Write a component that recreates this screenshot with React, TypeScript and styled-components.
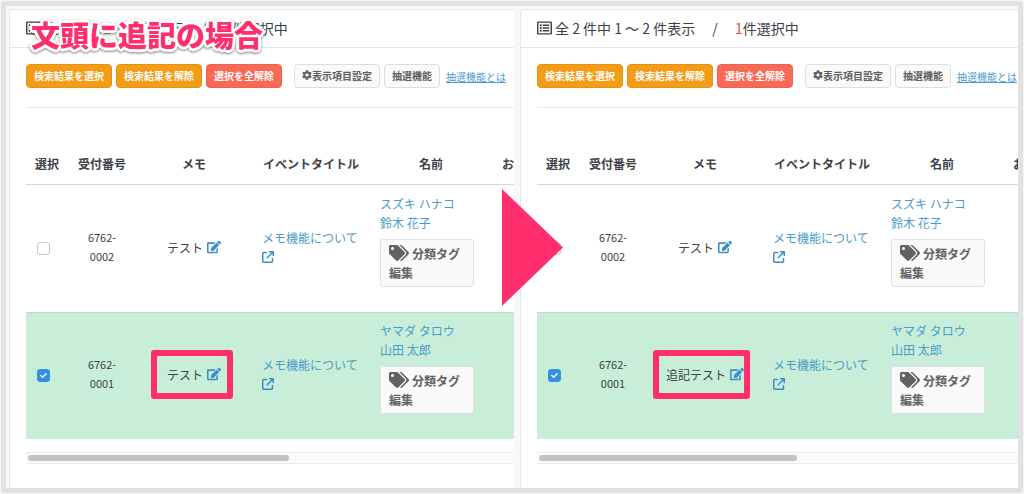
import React from 'react';
import styled, { createGlobalStyle } from 'styled-components';
import { FaCheck, FaCog, FaEdit, FaRegListAlt, FaTags } from 'react-icons/fa';
import { FaArrowUpRightFromSquare } from 'react-icons/fa6';

const PINK = '#ff2f6e';
const LINK = '#4a9cca';

const GlobalStyle = createGlobalStyle`
  *, *::before, *::after { box-sizing: border-box; }
  body {
    margin: 0;
    background: #f4f4f4;
    color: #3c4147;
    font-family: "Noto Sans CJK JP", "Noto Sans", sans-serif;
    font-size: 12px;
    line-height: 19px;
  }
  button, input { font: inherit; margin: 0; }
`;

const Page = styled.div`
  min-height: 100vh;
  padding: 1px;
  display: flex;
`;

const Frame = styled.main`
  flex: 1;
  min-width: 0;
  display: grid;
  grid-template-columns: minmax(0, 127fr) minmax(0, 126fr);
  border: 5px solid #e2e2e2;
  border-radius: 4px;
  background: #f8f8f8;
`;

const Shot = styled.section<{ $inset: number }>`
  display: flex;
  position: relative;
  padding: 3px 0 0 ${(p) => p.$inset}px;
`;

const Panel = styled.div`
  flex: 1;
  min-width: 0;
  overflow: hidden;
  background: #fff;
  border: solid #e8e8e8;
  border-width: 1px 0 0 1px;
  border-top-left-radius: 3px;
`;

const PanelHeader = styled.header`
  display: flex;
  align-items: center;
  height: 38px;
  padding: 0 0 2px 16px;
  border-bottom: 1px solid #e6e6e6;
`;

const Heading = styled.h2`
  display: flex;
  align-items: center;
  gap: 3px;
  margin: 0;
  font-size: 14px;
  font-weight: 400;
  line-height: 20px;
  white-space: pre;
  & > svg { width: 15px; height: 16px; }
`;

const Count = styled.span`
  color: #ef4b4b;
`;

const Body = styled.div`
  padding: 16px 0 24px 16px;
`;

const Toolbar = styled.div`
  display: flex;
  align-items: center;
  gap: 4px;
  padding-bottom: 19px;
  border-bottom: 1px solid #e9e9e9;
  white-space: nowrap;
`;

const tones = {
  orange: { bg: '#f39c18', border: '#e5920f', text: '#fff' },
  red: { bg: '#f76a56', border: '#f2614d', text: '#fff' },
  plain: { bg: '#fafafa', border: '#dedede', text: '#606060' },
};

const ToolButton = styled.button<{ $tone: keyof typeof tones }>`
  display: flex;
  align-items: center;
  flex: none;
  height: 24px;
  padding: 0 7px 2px;
  border: 1px solid ${(p) => tones[p.$tone].border};
  border-radius: 4px;
  background: ${(p) => tones[p.$tone].bg};
  color: ${(p) => tones[p.$tone].text};
  font-size: 10px;
  font-weight: 700;
`;

const ToolGroup = styled.div`
  display: flex;
  align-items: center;
  gap: 4px;
  margin-left: 8px;
`;

const HelpLink = styled.a`
  margin-left: 2px;
  color: ${LINK};
  font-size: 10px;
`;

const TableArea = styled.div`
  overflow: hidden;
  padding: 35px 0 13px;
`;

const Table = styled.table`
  width: 900px;
  table-layout: fixed;
  border-collapse: separate;
  border-spacing: 0;
`;

const Col = styled.col<{ $width?: number }>`
  width: ${(p) => (p.$width ? `${p.$width}px` : 'auto')};
`;

const HeadCell = styled.th<{ $start?: boolean }>`
  height: 42px;
  padding: 0 ${(p) => (p.$start ? 10 : 0)}px;
  border-bottom: 1px solid #d3d8de;
  text-align: ${(p) => (p.$start ? 'left' : 'center')};
  font-weight: 700;
  white-space: nowrap;
`;

const Row = styled.tr<{ $selected: boolean }>`
  background: ${(p) => (p.$selected ? '#c8eed9' : '#fff')};
  & > td { border-top: 1px solid ${(p) => (p.$selected ? '#aee0c5' : '#fff')}; }
`;

const Cell = styled.td<{ $center?: boolean; $top?: boolean }>`
  height: 127px;
  padding: ${(p) => (p.$top ? '8px 10px 0' : '0 10px 4px')};
  text-align: ${(p) => (p.$center ? 'center' : 'left')};
  vertical-align: ${(p) => (p.$top ? 'top' : 'middle')};
`;

const TickCell = styled(Cell)`
  padding-bottom: 2px;
`;

const Receipt = styled(Cell)`
  padding: 0 16px 4px;
  font-size: 11px;
`;

const Tick = styled.label`
  display: grid;
  width: 15px;
  place-items: center;
  & > * { grid-area: 1 / 1; }
  & > svg { width: 7px; height: 7px; color: #fff; pointer-events: none; }
`;

const TickBox = styled.input`
  appearance: none;
  width: 13px;
  height: 13px;
  border: 1px solid #c3c9d3;
  border-radius: 3px;
  background: #fff;
  &:checked { border-color: #338fe2; background: #338fe2; }
`;

const Memo = styled.span`
  display: inline-flex;
  align-items: center;
  gap: 4px;
  position: relative;
  white-space: nowrap;
`;

const EditButton = styled.button`
  display: flex;
  padding: 0;
  border: 0;
  background: none;
  color: #3a90c6;
  font-size: 14px;
`;

const Highlight = styled.span<{ $left: number; $right: number }>`
  position: absolute;
  inset: -15px ${(p) => -p.$right}px -15px ${(p) => -p.$left}px;
  border: 6px solid ${PINK};
  border-radius: 3px;
  pointer-events: none;
`;

const TextLink = styled.a`
  display: block;
  color: ${LINK};
  text-decoration: none;
  white-space: nowrap;
  & > svg { display: block; width: 12px; height: 12px; margin: 4px 0 3px; color: #3a90c6; }
`;

const TagButton = styled.button`
  display: block;
  width: 94px;
  margin-top: 7px;
  padding: 4px 8px;
  border: 1px solid #e0e0e0;
  border-radius: 3px;
  background: #fafafa;
  color: #626262;
  font-weight: 700;
  line-height: 19px;
  text-align: left;
  & > svg { width: 20px; height: 16px; margin-right: 3px; vertical-align: -2px; }
`;

const ScrollTrack = styled.div`
  height: 12px;
  padding: 2px;
  border: solid #ebebeb;
  border-width: 1px 0;
  background: #fafafa;
`;

const ScrollThumb = styled.div`
  width: 54%;
  height: 6px;
  border-radius: 3px;
  background: #c2c2c2;
`;

const Caption = styled.h1`
  position: absolute;
  z-index: 2;
  top: 8px;
  left: 25px;
  margin: 0;
  color: ${PINK};
  font-size: 29px;
  font-weight: 900;
  line-height: 40px;
  white-space: nowrap;
  text-shadow:
    3px 0 #fff, -3px 0 #fff, 0 3px #fff, 0 -3px #fff,
    2px 2px #fff, -2px 2px #fff, 2px -2px #fff, -2px -2px #fff,
    1px 0 ${PINK};
  filter: drop-shadow(0 1px 1px rgba(0, 0, 0, 0.5));
`;

const Arrow = styled.svg`
  position: absolute;
  z-index: 2;
  top: 183px;
  left: -12px;
  width: 61px;
  height: 117px;
`;

type Entry = {
  id: string;
  memo: string;
  kana: string;
  name: string;
  selected: boolean;
  highlight?: { left: number; right: number };
};

const firstEntry: Entry = {
  id: '6762-0002',
  memo: 'テスト',
  kana: 'スズキ ハナコ',
  name: '鈴木 花子',
  selected: false,
};

const before: Entry[] = [
  firstEntry,
  {
    id: '6762-0001',
    memo: 'テスト',
    kana: 'ヤマダ タロウ',
    name: '山田 太郎',
    selected: true,
    highlight: { left: 16, right: 12 },
  },
];

const after: Entry[] = [
  firstEntry,
  { ...before[1], memo: '追記テスト', highlight: { left: 13, right: 6 } },
];

function EntryRow({ entry }: { entry: Entry }) {
  return (
    <Row $selected={entry.selected}>
      <TickCell>
        <Tick>
          <TickBox type="checkbox" defaultChecked={entry.selected} aria-label={entry.id} />
          {entry.selected && <FaCheck />}
        </Tick>
      </TickCell>
      <Receipt $center>{entry.id}</Receipt>
      <Cell $center>
        <Memo>
          {entry.memo}
          <EditButton type="button" aria-label="メモ">
            <FaEdit />
          </EditButton>
          {entry.highlight && (
            <Highlight $left={entry.highlight.left} $right={entry.highlight.right} />
          )}
        </Memo>
      </Cell>
      <Cell>
        <TextLink href="#event">
          メモ機能について
          <FaArrowUpRightFromSquare />
        </TextLink>
      </Cell>
      <Cell $top>
        <TextLink href="#person">{entry.kana}</TextLink>
        <TextLink href="#person">{entry.name}</TextLink>
        <TagButton type="button">
          <FaTags />
          分類タグ編集
        </TagButton>
      </Cell>
      <Cell />
    </Row>
  );
}

function ResultPanel({ entries }: { entries: Entry[] }) {
  return (
    <Panel>
      <PanelHeader>
        <Heading>
          <FaRegListAlt />
          <span>
            全 2 件中 1 〜 2 件表示{'\u3000'} /{'\u3000'} <Count>1</Count>件選択中
          </span>
        </Heading>
      </PanelHeader>
      <Body>
        <Toolbar>
          <ToolButton type="button" $tone="orange">検索結果を選択</ToolButton>
          <ToolButton type="button" $tone="orange">検索結果を解除</ToolButton>
          <ToolButton type="button" $tone="red">選択を全解除</ToolButton>
          <ToolGroup>
            <ToolButton type="button" $tone="plain">
              <FaCog />
              表示項目設定
            </ToolButton>
            <ToolButton type="button" $tone="plain">抽選機能</ToolButton>
            <HelpLink href="#lottery">抽選機能とは</HelpLink>
          </ToolGroup>
        </Toolbar>
        <TableArea>
          <Table>
            <colgroup>
              <Col $width={42} />
              <Col $width={68} />
              <Col $width={116} />
              <Col $width={118} />
              <Col $width={122} />
              <Col />
            </colgroup>
            <thead>
              <tr>
                <HeadCell>選択</HeadCell>
                <HeadCell>受付番号</HeadCell>
                <HeadCell>メモ</HeadCell>
                <HeadCell>イベントタイトル</HeadCell>
                <HeadCell>名前</HeadCell>
                <HeadCell $start>お</HeadCell>
              </tr>
            </thead>
            <tbody>
              {entries.map((entry) => (
                <EntryRow key={entry.id} entry={entry} />
              ))}
            </tbody>
          </Table>
        </TableArea>
        <ScrollTrack>
          <ScrollThumb />
        </ScrollTrack>
      </Body>
    </Panel>
  );
}

export default function App() {
  return (
    <>
      <GlobalStyle />
      <Page>
        <Frame>
          <Shot $inset={3}>
            <Caption>文頭に追記の場合</Caption>
            <ResultPanel entries={before} />
          </Shot>
          <Shot $inset={6}>
            <ResultPanel entries={after} />
            <Arrow viewBox="0 0 61 117" aria-hidden="true">
              <path d="M0 0L61 58.5L0 117Z" fill={PINK} />
            </Arrow>
          </Shot>
        </Frame>
      </Page>
    </>
  );
}
